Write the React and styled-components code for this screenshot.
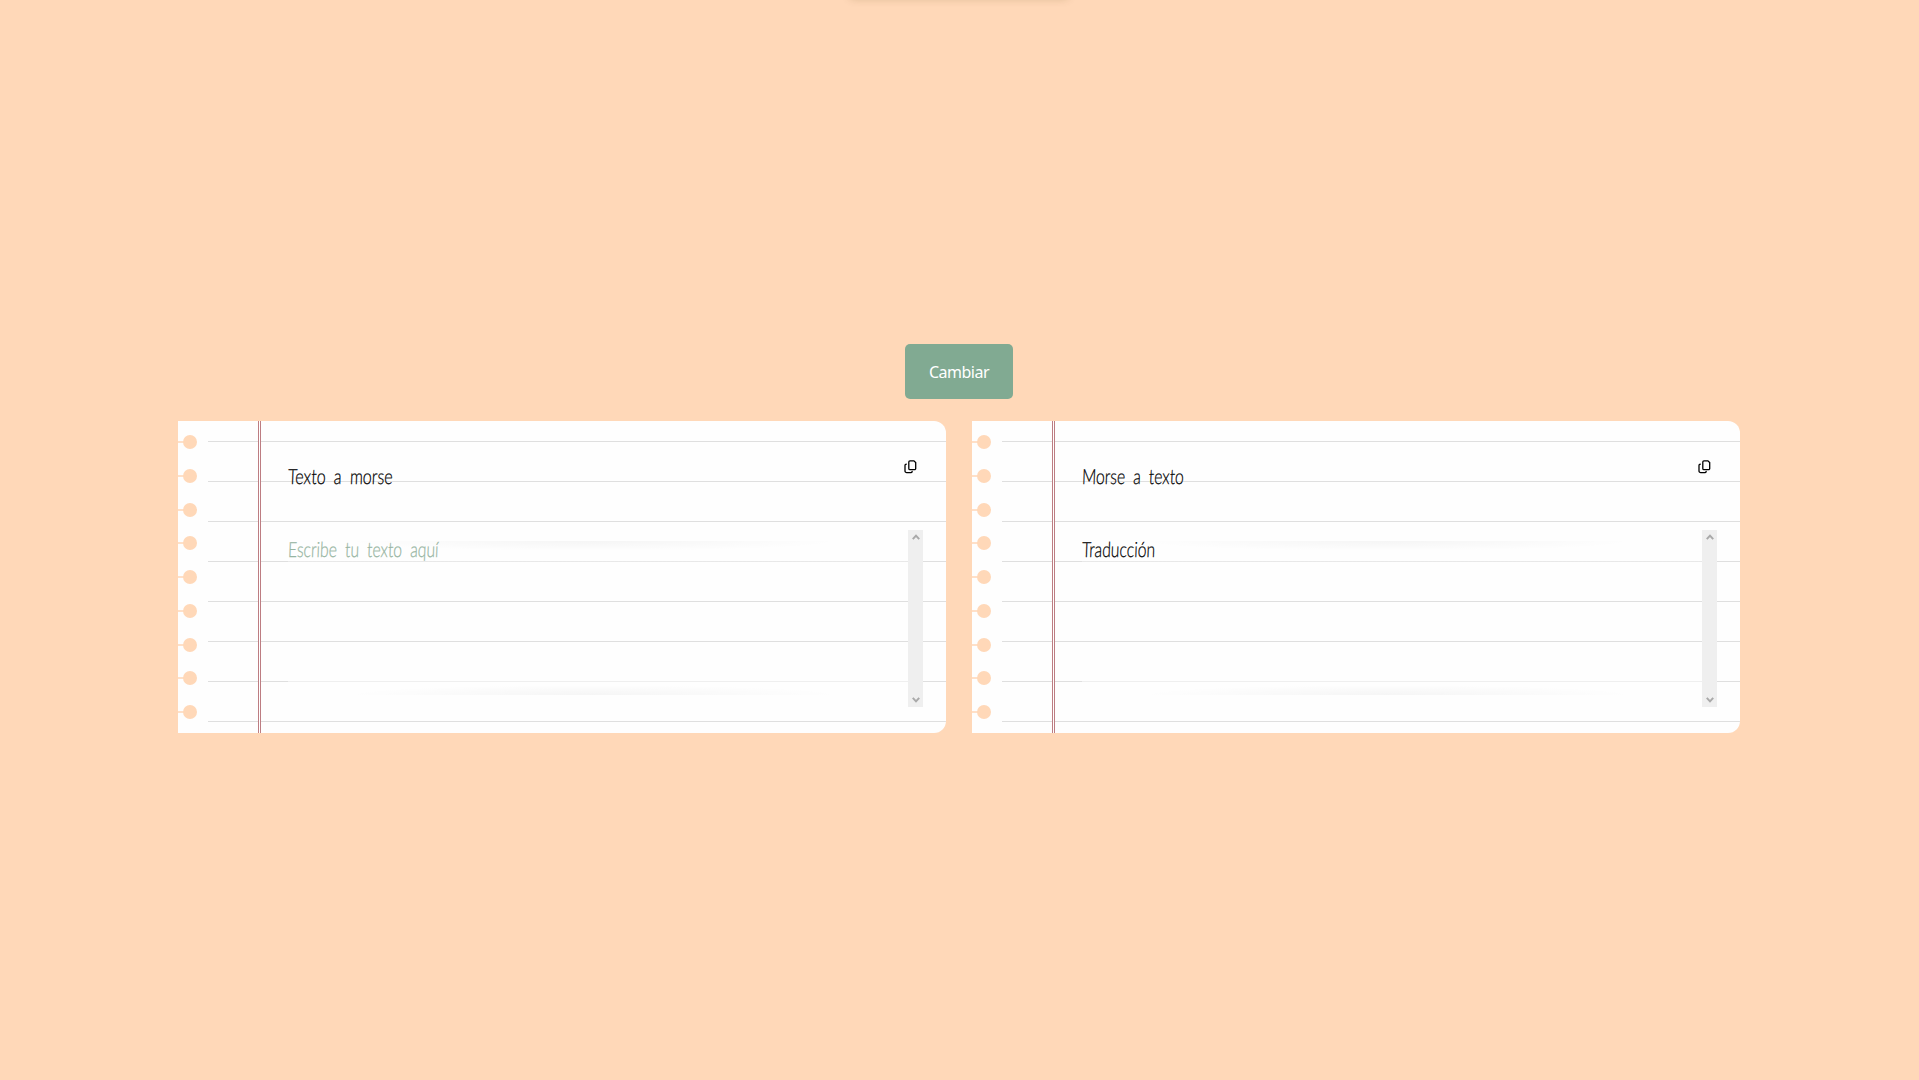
import React from "react";
import styled, { createGlobalStyle } from "styled-components";

const Global = createGlobalStyle`
  * { box-sizing: border-box; }
  body { margin: 0; background: #ffd8b8; overflow: hidden; }
  button, textarea { font: inherit; border: 0; padding: 0; }
`;

const Page = styled.main`
  min-height: 100vh;
  display: flex;
  flex-direction: column;
  align-items: center;
  padding-right: 1px;
  background: #ffd8b8;
  font-family: "Noto Sans", "Open Sans", sans-serif;
`;

const HiddenToast = styled.div`
  width: 220px;
  height: 50px;
  margin-top: -51px;
  margin-bottom: 1px;
  border-radius: 5px;
  box-shadow: 0 0 9px rgba(80, 70, 0, 0.2);
`;

const SwapButton = styled.button`
  margin-top: 344px;
  width: 108px;
  height: 55px;
  flex: none;
  border-radius: 5px;
  background: #81aa92;
  color: #fff;
  font-size: 16px;
  letter-spacing: -0.5px;
`;

const Notebook = styled.div`
  display: flex;
  gap: 26px;
  margin-top: 22px;
`;

const Sheet = styled.section`
  display: flex;
  width: 768px;
  height: 312px;
  border-radius: 0 12px 12px 0;
  background: #fefefe;
  overflow: hidden;
`;

const Binding = styled.div`
  width: 30px;
  display: flex;
  flex-direction: column;
  padding-top: 14px;
`;

const Hole = styled.div`
  display: flex;
  align-items: center;
  flex: none;
  height: 14px;
  margin-bottom: 19.75px;
  &::before {
    content: "";
    width: 6px;
    height: 2px;
    background: #ffe0c8;
  }
  &::after {
    content: "";
    width: 14px;
    height: 14px;
    margin-left: -1px;
    border-radius: 50%;
    background: #ffd8b8;
  }
`;

const Ruled = styled.div`
  flex: 1;
  display: flex;
  background: linear-gradient(#dfdfdf, #dfdfdf) 0 0 / 100% 1px no-repeat;
  background: linear-gradient(transparent 20px, #dfdfdf 20px, #dfdfdf 21px, transparent 21px) 0 0 / 100% 40px;
`;

const MarginRule = styled.div`
  width: 3px;
  margin-left: 50px;
  border: solid #bd7d82;
  border-width: 0 1px;
  background: #fff;
`;

const Content = styled.div`
  flex: 1;
  display: flex;
  flex-direction: column;
  padding: 38px 23px 0 27px;
`;

const Header = styled.header`
  display: flex;
  justify-content: space-between;
  height: 71px;
`;

const Hand = styled.span`
  display: block;
  width: max-content;
  height: 34px;
  font-family: Lato, "Open Sans", sans-serif;
  font-weight: 300;
  font-size: 21px;
  line-height: 34px;
  color: ${(p) => p.$color || "#000"};
  -webkit-text-stroke: 0.25px currentColor;
  word-spacing: 5px;
  transform: scaleX(${(p) => p.$fit}) skewX(-3deg);
  transform-origin: left center;
`;

const CopyButton = styled.button`
  display: flex;
  width: 18px;
  height: 14px;
  margin: 1px 1px 0 0;
  background: none;
`;

const Area = styled.div`
  display: flex;
  justify-content: space-between;
  height: 177px;
  padding-top: 2px;
  background:
    radial-gradient(farthest-side at 50% 0, rgba(0, 0, 0, 0.035), transparent) 55px 11px / 500px 10px no-repeat,
    radial-gradient(farthest-side at 50% 100%, rgba(0, 0, 0, 0.035), transparent) 55px 155px / 500px 10px no-repeat,
    linear-gradient(#fefefe 30%, rgba(254, 254, 254, 0)) 0 0 / calc(100% - 15px) 40px no-repeat,
    linear-gradient(rgba(254, 254, 254, 0), #fefefe 70%) 0 100% / calc(100% - 15px) 40px no-repeat;
`;

const Scrollbar = styled.div`
  display: flex;
  flex-direction: column;
  align-items: center;
  justify-content: space-between;
  width: 15px;
  height: 177px;
  margin-top: -2px;
  padding: 4px 0;
  background: #efefef;
`;

const Chevron = ({ down }) => (
  <svg width="8" height="6" viewBox="0 0 8 6" fill="none" stroke="#a9a9a9" strokeWidth="2">
    <path d={down ? "M.8 .8L4 4.300 7.200 .8" : "M.8 5.200L4 1.700l3.200 3.500"} />
  </svg>
);

const CopyIcon = () => (
  <svg width="13" height="14" viewBox="0 0 13 14" fill="none" stroke="#000" strokeWidth="1.3" strokeLinecap="round">
    <path d="M6 .8h3.900l1.800 1.800v5.800a1.200 1.200 0 0 1-1.200 1.200H6a1.200 1.200 0 0 1-1.200-1.200V2A1.200 1.200 0 0 1 6 .8z" />
    <path d="M2.300 4.200A1.300 1.300 0 0 0 1 5.500v5.400a1.700 1.700 0 0 0 1.700 1.700h4a1.500 1.500 0 0 0 1.500-1.300" />
  </svg>
);

const Note = ({ title, titleFit, text, textFit, color }) => (
  <Sheet>
    <Binding>
      {Array.from({ length: 9 }, (_, i) => <Hole key={i} />)}
    </Binding>
    <Ruled>
      <MarginRule />
      <Content>
        <Header>
          <Hand $fit={titleFit}>{title}</Hand>
          <CopyButton aria-label="Copiar"><CopyIcon /></CopyButton>
        </Header>
        <Area>
          <Hand $fit={textFit} $color={color}>{text}</Hand>
          <Scrollbar>
            <Chevron />
            <Chevron down />
          </Scrollbar>
        </Area>
      </Content>
    </Ruled>
  </Sheet>
);

export default function App() {
  return (
    <Page>
      <Global />
      <HiddenToast />
      <SwapButton>Cambiar</SwapButton>
      <Notebook>
        <Note title="Texto a morse" titleFit={0.768} text="Escribe tu texto aquí" textFit={0.75} color="#97b5a2" />
        <Note title="Morse a texto" titleFit={0.75} text="Traducción" textFit={0.75} />
      </Notebook>
    </Page>
  );
}
